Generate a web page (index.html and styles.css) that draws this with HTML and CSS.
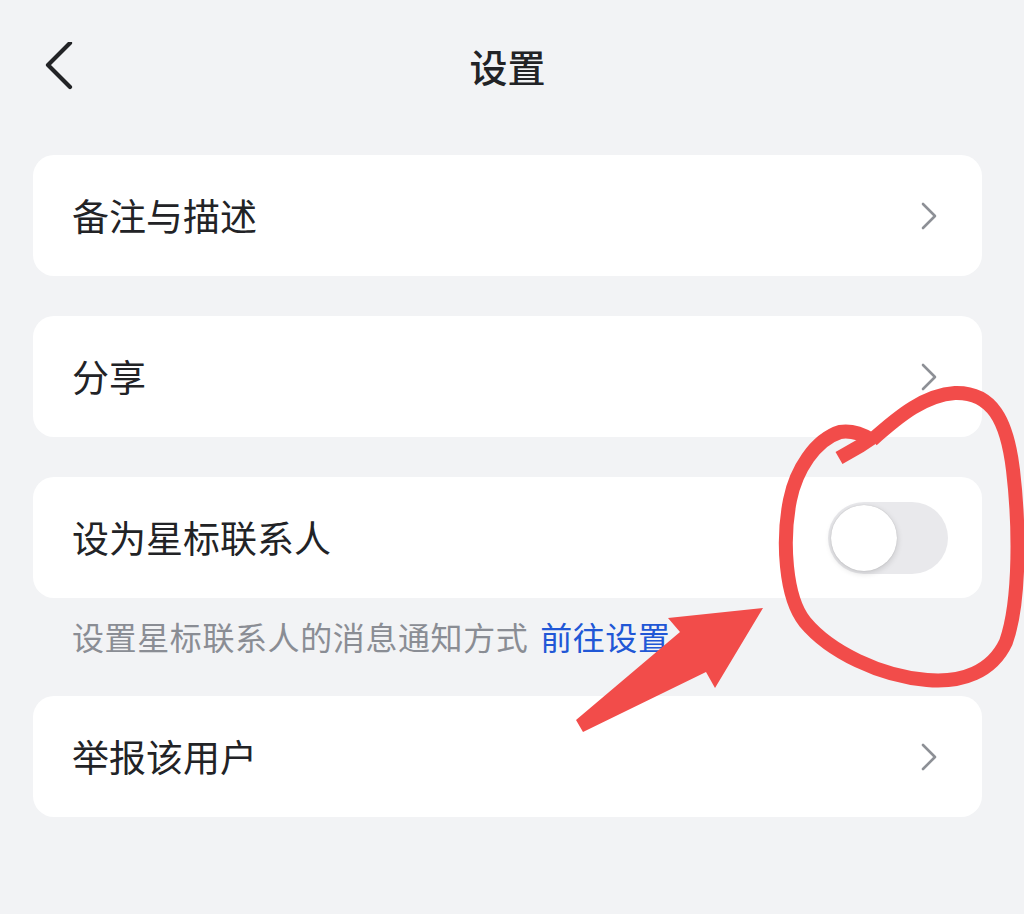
FILE: index.html
```html
<!DOCTYPE html>
<html lang="zh-CN">
<head>
<meta charset="utf-8">
<title>设置</title>
<link rel="stylesheet" href="styles.css">
</head>
<body>
<div class="page">
  <header class="header">
    <div class="back">
      <svg width="30" height="50" viewBox="0 0 30 50"><path d="M26 4 L4 26 L26 48" fill="none" stroke="#222326" stroke-width="4.2" stroke-linecap="round" stroke-linejoin="round" transform="translate(-1,-3)"/></svg>
    </div>
    <h1 class="title">设置</h1>
    <div></div>
  </header>

  <div class="card">
    <span class="label">备注与描述</span>
    <svg class="chev" width="16" height="28" viewBox="0 0 16 28"><path d="M2 2 L14 14 L2 26" fill="none" stroke="#8d9096" stroke-width="2.6" stroke-linecap="round" stroke-linejoin="round"/></svg>
  </div>

  <div class="card">
    <span class="label">分享</span>
    <svg class="chev" width="16" height="28" viewBox="0 0 16 28"><path d="M2 2 L14 14 L2 26" fill="none" stroke="#8d9096" stroke-width="2.6" stroke-linecap="round" stroke-linejoin="round"/></svg>
  </div>

  <div class="card card-toggle">
    <span class="label">设为星标联系人</span>
    <div class="toggle"><div class="knob"></div></div>
  </div>
  <p class="hint">设置星标联系人的消息通知方式 <a class="link">前往设置</a></p>

  <div class="card card-last">
    <span class="label">举报该用户</span>
    <svg class="chev" width="16" height="28" viewBox="0 0 16 28"><path d="M2 2 L14 14 L2 26" fill="none" stroke="#8d9096" stroke-width="2.6" stroke-linecap="round" stroke-linejoin="round"/></svg>
  </div>
</div>

<svg class="annot" width="1024" height="914" viewBox="0 0 1024 914">
  <g fill="none" stroke="#f24c4a" stroke-width="14" stroke-linejoin="round">
    <path d="M872 440 C900 415, 925 395, 955 393 C992 392, 1007 420, 1013 470 C1019 520, 1021 600, 1006 642 C992 672, 962 683, 927 680 C880 676, 830 652, 805 622 C785 597, 782 540, 790 500 C796 470, 815 440, 840 432 C852 430, 862 434, 872 440"/>
    <path d="M839 458 L860 446 L872 438"/>
  </g>
  <polygon fill="#f24c4a" points="763,608 715,688 706,672 583,732 576,720 680,632 668,618"/>
</svg>
</body>
</html>
```

FILE: styles.css
```css
html, body {
  margin: 0;
  padding: 0;
  background: #f2f3f5;
}

body {
  font-family: "Noto Sans CJK SC", "Noto Sans", sans-serif;
  color: #222326;
  width: 1024px;
  height: 914px;
  overflow: hidden;
  position: relative;
}

.page {
  width: 949px;
  padding: 0 33px;
}

.header {
  height: 132px;
  display: grid;
  grid-template-columns: 1fr auto 1fr;
  align-items: center;
  margin-bottom: 23px;
}

.back {
  display: flex;
  align-items: center;
  padding-left: 12px;
  padding-top: 1px;
}

.title {
  margin: 0;
  font-size: 38px;
  font-weight: 500;
  line-height: 1;
  letter-spacing: 0;
}

.card {
  height: 121px;
  background: #ffffff;
  border-radius: 21px;
  display: flex;
  align-items: center;
  justify-content: space-between;
  padding: 0 45px 0 39px;
  margin-bottom: 40px;
}

.label {
  font-size: 37px;
  line-height: 1;
}

.chev {
  display: block;
}

.card-toggle {
  padding-right: 34px;
  margin-bottom: 0;
}

.toggle {
  width: 120px;
  height: 72px;
  border-radius: 36px;
  background: #e9e9ec;
  display: flex;
  align-items: center;
  padding-left: 3px;
  box-sizing: border-box;
}

.knob {
  width: 66px;
  height: 66px;
  border-radius: 50%;
  background: #ffffff;
  box-shadow: 0 2px 6px rgba(0, 0, 0, 0.16), 0 0 1px rgba(0, 0, 0, 0.2);
}

.hint {
  margin: 0;
  height: 98px;
  box-sizing: border-box;
  padding: 18px 0 0 39px;
  font-size: 32px;
  line-height: 40px;
  letter-spacing: 0.6px;
  color: #8a8d94;
}

.link {
  color: #2157d6;
  margin-left: 4px;
}

.annot {
  position: absolute;
  left: 0;
  top: 0;
  pointer-events: none;
}
```
